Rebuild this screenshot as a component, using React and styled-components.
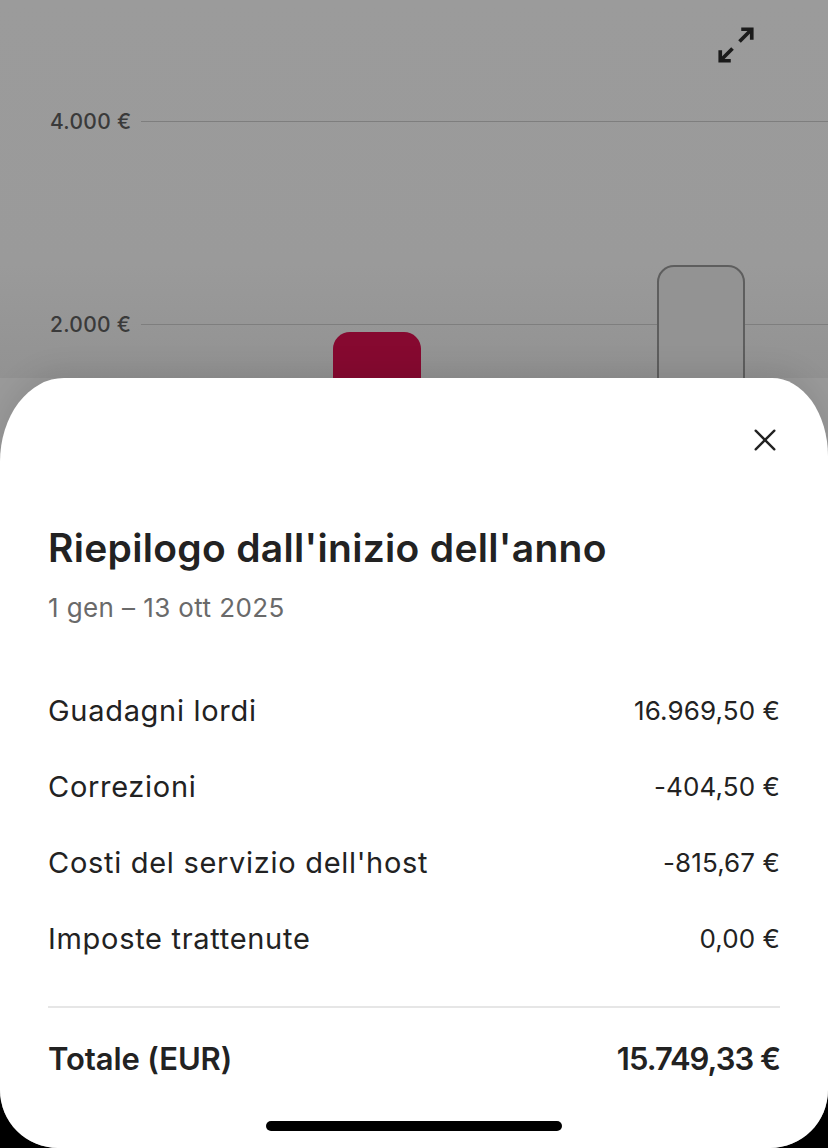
import React from "react";
import styled, { createGlobalStyle } from "styled-components";

const GlobalStyle = createGlobalStyle`
  html, body {
    margin: 0;
    padding: 0;
    background: #000;
  }
  * {
    box-sizing: border-box;
  }
  body {
    font-family: Inter, "Noto Sans", "Liberation Sans", sans-serif;
    -webkit-font-smoothing: antialiased;
  }
`;

const gridLines = [
  { label: "4.000 €", gap: 0 },
  { label: "2.000 €", gap: 177 },
];

const bars = [
  { left: 333, top: 332, filled: true },
  { left: 657, top: 265, filled: false },
];

const rows = [
  { label: "Guadagni lordi", value: "16.969,50 €" },
  { label: "Correzioni", value: "-404,50 €" },
  { label: "Costi del servizio dell'host", value: "-815,67 €" },
  { label: "Imposte trattenute", value: "0,00 €" },
];

export default function App() {
  return (
    <>
      <GlobalStyle />
      <Screen>
        <ChartArea>
          <Toolbar>
            <IconButton aria-label="Espandi">
              <svg
                width="42"
                height="42"
                viewBox="0 0 24 24"
                fill="none"
                stroke="#1b1b1b"
                strokeWidth="2.1"
                strokeLinecap="butt"
                strokeLinejoin="miter"
              >
                <path d="M15 3h6v6" />
                <path d="M9 21H3v-6" />
                <path d="M21 3l-7 7" />
                <path d="M3 21l7-7" />
              </svg>
            </IconButton>
          </Toolbar>
          {gridLines.map((g) => (
            <GridRow key={g.label} $gap={g.gap}>
              <AxisLabel>{g.label}</AxisLabel>
              <GridLine />
            </GridRow>
          ))}
          {bars.map((b) => (
            <Bar key={b.left} $filled={b.filled} style={{ left: b.left, top: b.top }} />
          ))}
        </ChartArea>

        <Sheet>
          <CloseRow>
            <IconButton aria-label="Chiudi">
              <svg width="28" height="28" viewBox="0 0 24 24" fill="none" stroke="#222" strokeWidth="2" strokeLinecap="round">
                <path d="M4 4l16 16" />
                <path d="M20 4L4 20" />
              </svg>
            </IconButton>
          </CloseRow>
          <Title>Riepilogo dall'inizio dell'anno</Title>
          <Subtitle>1 gen – 13 ott 2025</Subtitle>
          <List>
            {rows.map((r) => (
              <Row key={r.label}>
                <Label>{r.label}</Label>
                <Value>{r.value}</Value>
              </Row>
            ))}
          </List>
          <Divider />
          <TotalRow>
            <TotalLabel>Totale (EUR)</TotalLabel>
            <TotalValue>15.749,33 €</TotalValue>
          </TotalRow>
          <HomeIndicator />
        </Sheet>
      </Screen>
    </>
  );
}

const Screen = styled.div`
  width: 828px;
  height: 1148px;
  display: flex;
  flex-direction: column;
  background: #9a9a9a;
  border-radius: 0 0 58px 58px;
  overflow: hidden;
`;

const ChartArea = styled.div`
  position: relative;
  height: 378px;
  flex-shrink: 0;
  display: flex;
  flex-direction: column;
  overflow: hidden;
  background: linear-gradient(#9b9b9b 0%, #9a9a9a 70%, #929292 100%);
`;

const Toolbar = styled.div`
  display: flex;
  justify-content: flex-end;
  padding: 24px 71px 0 0;
  height: 108px;
`;

const IconButton = styled.button`
  display: flex;
  align-items: center;
  justify-content: center;
  padding: 0;
  border: 0;
  background: transparent;
  cursor: pointer;
  height: fit-content;
`;

const GridRow = styled.div`
  display: flex;
  align-items: center;
  gap: 10px;
  padding-left: 50px;
  height: 26px;
  margin-top: ${(p) => p.$gap}px;
`;

const AxisLabel = styled.span`
  font-size: 21px;
  font-weight: 500;
  color: #3a3a3a;
  white-space: nowrap;
  letter-spacing: 0.3px;
`;

const GridLine = styled.div`
  flex: 1;
  height: 1px;
  background: #7e7e7e;
`;

const Bar = styled.div`
  position: absolute;
  width: 88px;
  height: 400px;
  border-radius: 17px;
  background: ${(p) => (p.$filled ? "#860930" : "#939393")};
  border: ${(p) => (p.$filled ? "none" : "2px solid #5e5e5e")};
`;

const Sheet = styled.div`
  flex: 1;
  display: flex;
  flex-direction: column;
  padding: 48px 48px 0;
  background: #fff;
  border-radius: 64px 56px 0 0 / 84px 78px 0 0;
  box-shadow: 0 -6px 30px rgba(0, 0, 0, 0.1);
  color: #222;
  position: relative;
`;

const CloseRow = styled.div`
  display: flex;
  justify-content: flex-end;
  height: 32px;
  margin-right: 1px;
`;

const Title = styled.h1`
  margin: 68px 0 0;
  font-size: 39px;
  line-height: 44px;
  font-weight: 600;
  letter-spacing: 0.3px;
  color: #222;
`;

const Subtitle = styled.p`
  margin: 22px 0 0;
  font-size: 26px;
  line-height: 32px;
  font-weight: 400;
  color: #6a6a6a;
  letter-spacing: 0.4px;
`;

const List = styled.div`
  display: flex;
  flex-direction: column;
  margin-top: 48px;
`;

const Row = styled.div`
  display: flex;
  align-items: center;
  justify-content: space-between;
  height: 76px;
`;

const Label = styled.span`
  font-size: 29px;
  font-weight: 400;
  letter-spacing: 0.7px;
  color: #222;
`;

const Value = styled.span`
  font-size: 26px;
  font-weight: 400;
  letter-spacing: 0.1px;
  color: #222;
`;

const Divider = styled.div`
  height: 2px;
  background: #e6e6e6;
  margin-top: 30px;
`;

const TotalRow = styled.div`
  display: flex;
  align-items: center;
  justify-content: space-between;
  height: 40px;
  margin-top: 30px;
`;

const TotalLabel = styled.span`
  font-size: 31px;
  font-weight: 600;
  letter-spacing: -0.1px;
  color: #222;
`;

const TotalValue = styled.span`
  font-size: 31px;
  font-weight: 600;
  letter-spacing: -1px;
  color: #222;
`;

const HomeIndicator = styled.div`
  align-self: center;
  width: 296px;
  height: 10px;
  border-radius: 5px;
  background: #000;
  margin-top: 43px;
`;
